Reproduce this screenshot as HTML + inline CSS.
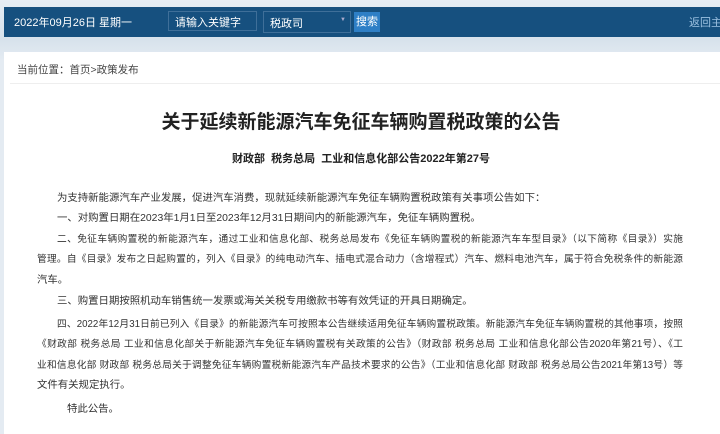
<!DOCTYPE html>
<html><head><meta charset="utf-8"><style>
body{margin:0;width:720px;height:434px;overflow:hidden;background:linear-gradient(180deg,#e6edf4,#d7e2ec 40px,#e4ebf2 60px);font-family:"Liberation Sans","Noto Sans CJK SC",sans-serif;position:relative}
.bar{position:absolute;left:4px;top:7px;width:716px;height:30px;background:#16507f}
.t{position:absolute;white-space:nowrap}
.w{position:absolute;left:4px;top:52px;width:716px;height:382px;background:#fff}
.l{position:absolute;left:37px;width:646px;font-size:9.7px;color:#333;line-height:16px;text-align:justify;text-align-last:justify;white-space:nowrap;height:16px}
.e{text-align-last:left;font-size:10.4px}
</style></head><body>
<div class="bar"></div>
<div class="t" style="left:14px;top:14px;font-size:11px;color:#fff">2022年09月26日 星期一</div>
<div class="t" style="left:168px;top:11px;width:89px;height:20px;border:1px solid #3f6f99;box-sizing:border-box;color:#fff;font-size:11px;padding:2px 0 0 6px">请输入关键字</div>
<div class="t" style="left:263px;top:11px;width:88px;height:22px;border:1px solid #3f6f99;box-sizing:border-box;color:#fff;font-size:11px;padding:3px 0 0 6px">税政司<span style="position:absolute;left:76px;top:5px;font-size:6px;color:#aac">▼</span></div>
<div class="t" style="left:354px;top:12px;width:26px;height:20px;background:#2e7fc6;color:#fff;font-size:11px;text-align:center;line-height:20px">搜索</div>
<div class="t" style="left:689px;top:14px;font-size:11px;color:#9cc0e0">返回主</div>
<div class="w"></div>
<div class="t" style="left:17px;top:62px;font-size:10.5px;color:#444">当前位置：首页&gt;政策发布</div>
<div class="t" style="left:10px;top:83px;width:710px;height:1px;background:#eee"></div>
<div class="t" style="left:0;width:722px;top:107px;text-align:center;font-size:19px;font-weight:bold;color:#222">关于延续新能源汽车免征车辆购置税政策的公告</div>
<div class="t" style="left:0;width:722px;top:150px;text-align:center;font-size:11px;font-weight:bold;color:#222">财政部 &nbsp;税务总局 &nbsp;工业和信息化部公告2022年第27号</div>
<div class="l e" style="top:191px;left:57px;width:auto">为支持新能源汽车产业发展，促进汽车消费，现就延续新能源汽车免征车辆购置税政策有关事项公告如下：</div>
<div class="l e" style="top:211px;left:57px;width:auto">一、对购置日期在2023年1月1日至2023年12月31日期间内的新能源汽车，免征车辆购置税。</div>
<div class="l" style="top:232px;left:57px;width:626px">二、免征车辆购置税的新能源汽车，通过工业和信息化部、税务总局发布《免征车辆购置税的新能源汽车车型目录》（以下简称《目录》）实施</div>
<div class="l" style="top:252px">管理。自《目录》发布之日起购置的，列入《目录》的纯电动汽车、插电式混合动力（含增程式）汽车、燃料电池汽车，属于符合免税条件的新能源</div>
<div class="l e" style="top:273px">汽车。</div>
<div class="l e" style="top:294px;left:57px;width:auto">三、购置日期按照机动车销售统一发票或海关关税专用缴款书等有效凭证的开具日期确定。</div>
<div class="l" style="top:317px;left:57px;width:626px">四、2022年12月31日前已列入《目录》的新能源汽车可按照本公告继续适用免征车辆购置税政策。新能源汽车免征车辆购置税的其他事项，按照</div>
<div class="l" style="top:337px">《财政部 税务总局 工业和信息化部关于新能源汽车免征车辆购置税有关政策的公告》（财政部 税务总局 工业和信息化部公告2020年第21号）、《工</div>
<div class="l" style="top:358px">业和信息化部 财政部 税务总局关于调整免征车辆购置税新能源汽车产品技术要求的公告》（工业和信息化部 财政部 税务总局公告2021年第13号）等</div>
<div class="l e" style="top:378px">文件有关规定执行。</div>
<div class="l e" style="top:402px;left:67px;width:auto">特此公告。</div>
</body></html>
